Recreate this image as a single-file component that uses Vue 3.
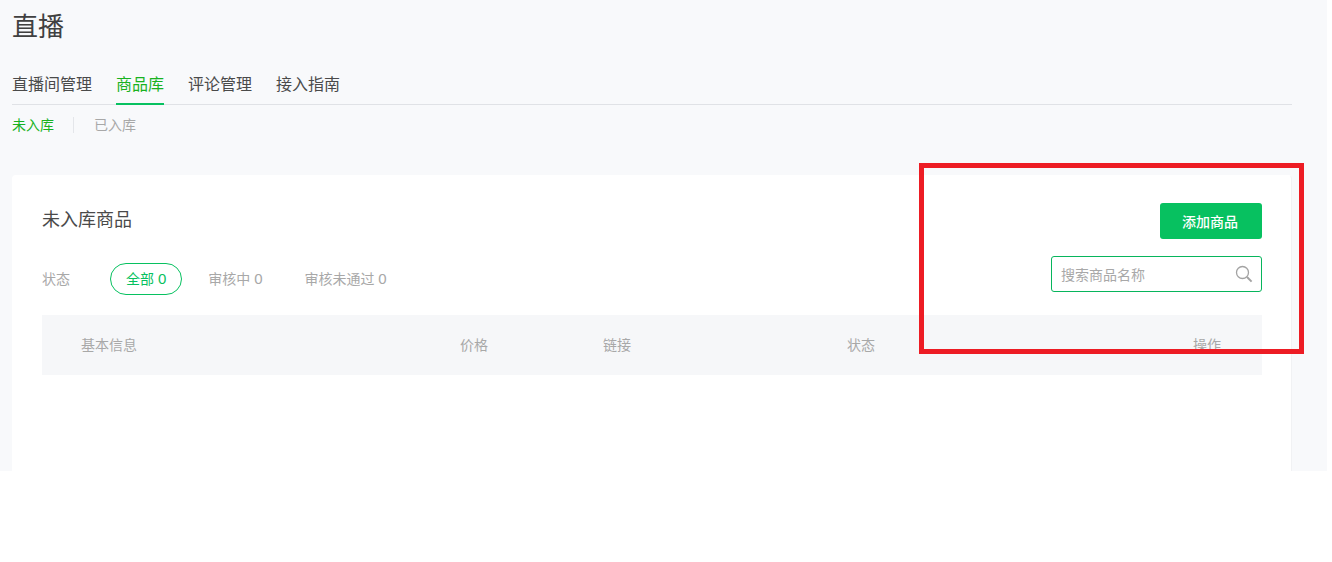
<script setup>
const tabs = [
  { label: '直播间管理' },
  { label: '商品库', active: true },
  { label: '评论管理' },
  { label: '接入指南' }
]
const filters = [
  { label: '全部', count: 0, active: true },
  { label: '审核中', count: 0 },
  { label: '审核未通过', count: 0 }
]
const columns = ['基本信息', '价格', '链接', '状态', '操作']
</script>

<template>
  <div class="viewport">
    <main class="page">
      <h1 class="title">直播</h1>
      <nav class="tabs">
        <a v-for="t in tabs" :key="t.label" class="tab" :class="{ active: t.active }">{{ t.label }}</a>
      </nav>
      <div class="subtabs">
        <a class="sub active">未入库</a>
        <i class="sep"></i>
        <a class="sub">已入库</a>
      </div>
      <section class="card">
        <div class="card-head">
          <h2 class="card-title">未入库商品</h2>
          <button class="add">添加商品</button>
        </div>
        <div class="toolbar">
          <div class="filters">
            <span class="filter-label">状态</span>
            <a v-for="f in filters" :key="f.label" class="filter" :class="{ active: f.active }">{{ f.label }} <span class="count">{{ f.count }}</span></a>
          </div>
          <label class="search">
            <input class="search-input" placeholder="搜索商品名称" />
            <svg class="search-icon" width="18" height="18" viewBox="0 0 18 18" fill="none" stroke="#a3a3a3">
              <circle cx="7.5" cy="7.5" r="6" stroke-width="1.3" />
              <path d="M12 12l4.6 4.6" stroke-width="2" />
            </svg>
          </label>
        </div>
        <div class="thead">
          <span v-for="c in columns" :key="c">{{ c }}</span>
        </div>
      </section>
    </main>
    <div class="highlight"></div>
  </div>
</template>

<style>
html, body { margin: 0; background: #fff; }
</style>

<style scoped>
.viewport {
  position: relative;
  width: 1332px;
  height: 562px;
  overflow: hidden;
  background: #fff;
  font-family: "Liberation Sans", "Noto Sans CJK SC", sans-serif;
}
.page {
  box-sizing: border-box;
  width: 1327px;
  height: 471px;
  padding: 0 35px 0 12px;
  background: #f8f9fb;
  overflow: hidden;
}
.title {
  margin: 0;
  height: 54px;
  font-size: 26px;
  line-height: 54px;
  font-weight: 400;
  color: #404040;
}
.tabs {
  display: flex;
  gap: 24px;
  height: 51px;
  box-sizing: border-box;
  border-bottom: 1px solid #e0e2e6;
}
.tab {
  box-sizing: border-box;
  height: 51px;
  padding-top: 19px;
  font-size: 16px;
  line-height: 24px;
  color: #4a4a4a;
}
.tab.active {
  color: #18b21f;
  border-bottom: 2px solid #07c160;
}
.subtabs {
  display: flex;
  align-items: center;
  height: 40px;
}
.sub {
  font-size: 14px;
  line-height: 20px;
  color: #a8a8a8;
}
.sub.active { color: #18b21f; }
.sep {
  width: 1px;
  height: 16px;
  margin: 0 20px 0 19px;
  background: #e4e6ea;
}
.card {
  box-sizing: border-box;
  margin-top: 30px;
  height: 340px;
  padding: 27px 29px 0 29px;
  background: #fff;
  border: 1px solid #f1f2f4;
  border-top-color: #fff;
  border-left-color: #fff;
  border-radius: 4px;
}
.card-head {
  display: flex;
  justify-content: space-between;
  align-items: flex-start;
  height: 36px;
}
.card-title {
  margin: 0;
  font-size: 18px;
  line-height: 35px;
  font-weight: 400;
  color: #4a4a4a;
}
.add {
  width: 102px;
  height: 36px;
  padding: 0 2px 0 0;
  border: 0;
  border-radius: 3px;
  background: #07c160;
  color: #fff;
  font: 500 14px "Noto Sans CJK SC", sans-serif;
}
.toolbar {
  display: flex;
  justify-content: space-between;
  margin-top: 17px;
  height: 59px;
}
.filters {
  display: flex;
  align-items: center;
  height: 32px;
  margin-top: 7px;
}
.filter-label {
  width: 68px;
  padding-bottom: 2px;
  font-size: 14px;
  color: #a8a8a8;
}
.filter {
  box-sizing: border-box;
  height: 32px;
  margin-right: 10px;
  padding: 0 15px;
  border: 1px solid transparent;
  border-radius: 16px;
  font-size: 14px;
  line-height: 30px;
  color: #a8a8a8;
}
.count { font-size: 15px; }
.filter.active {
  color: #07c160;
  border-color: #07c160;
}
.search {
  box-sizing: border-box;
  display: flex;
  align-items: center;
  width: 211px;
  height: 36px;
  padding: 0 8px 0 9px;
  border: 1px solid #07b55c;
  border-radius: 3px;
}
.search-input {
  flex: 1;
  min-width: 0;
  padding: 0;
  border: 0;
  outline: 0;
  background: none;
  font: 14px "Noto Sans CJK SC", sans-serif;
  color: #353535;
}
.search-input::placeholder { color: #a8a8a8; opacity: 1; }
.search-icon { display: block; }
.thead {
  display: grid;
  grid-template-columns: 379px 143px 244px 1fr auto;
  align-items: center;
  box-sizing: border-box;
  height: 60px;
  padding: 0 41px 2px 39px;
  background: #f6f7f9;
  font-size: 14px;
  color: #a8a8a8;
}
.highlight {
  position: absolute;
  left: 919px;
  top: 163px;
  box-sizing: border-box;
  width: 385px;
  height: 191px;
  border: 5px solid #ed1c24;
}
</style>
